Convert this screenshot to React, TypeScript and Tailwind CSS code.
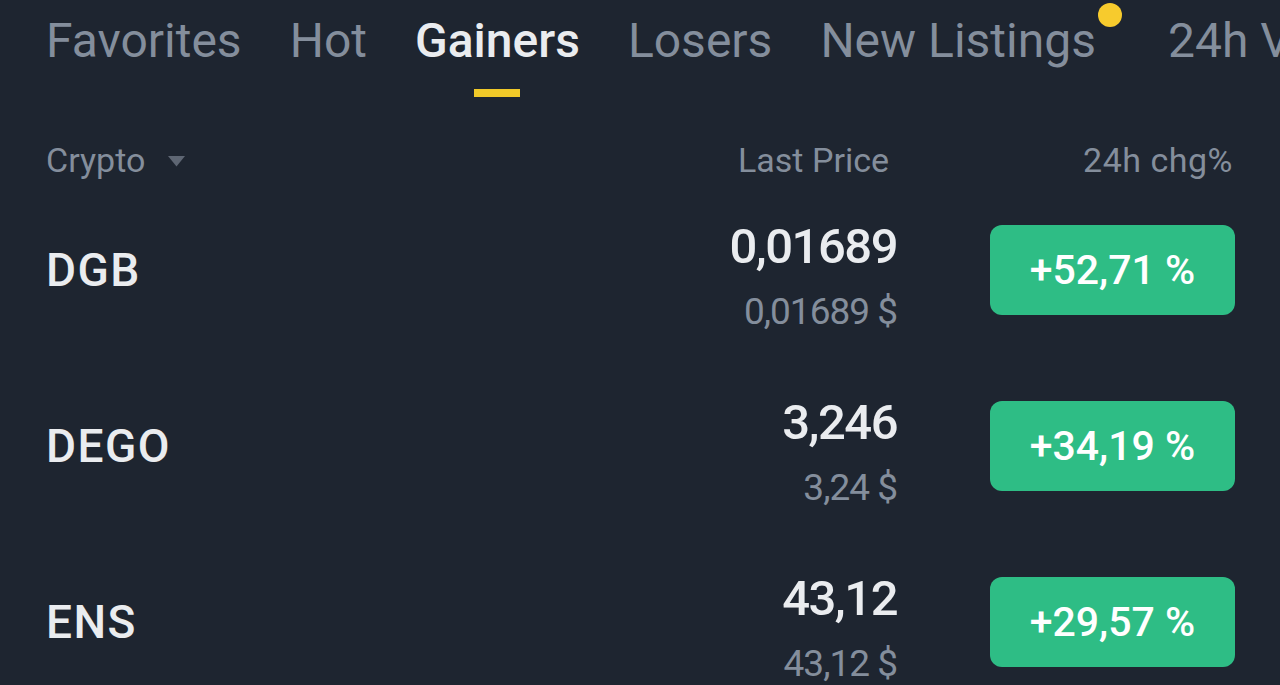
import { useState } from 'react'

interface Coin {
  symbol: string
  price: string
  usd: string
  change: string
}

const TABS = ['Favorites', 'Hot', 'Gainers', 'Losers', 'New Listings', '24h Volume']

const COINS: Coin[] = [
  { symbol: 'DGB', price: '0,01689', usd: '0,01689 $', change: '+52,71 %' },
  { symbol: 'DEGO', price: '3,246', usd: '3,24 $', change: '+34,19 %' },
  { symbol: 'ENS', price: '43,12', usd: '43,12 $', change: '+29,57 %' },
]

export default function App() {
  const [active, setActive] = useState('Gainers')

  return (
    <main className="h-[685px] w-[1280px] overflow-hidden bg-[#1e2530] font-['Roboto',sans-serif]">
      {/* tabs */}
      <nav className="flex h-[100px] gap-[48px] overflow-hidden whitespace-nowrap pl-[46px]">
        {TABS.map((t) => (
          <button
            key={t}
            onClick={() => setActive(t)}
            className={`relative flex flex-col items-center pt-[17px] ${t === 'New Listings' ? 'mr-[24px]' : ''}`}
          >
            <span
              className={`text-[48px] leading-[48px] ${
                t === active ? 'font-medium text-[#eaecef]' : 'text-[#848e9c]'
              }`}
            >
              {t}
            </span>
            {t === active && <span className="mt-[24px] h-[8px] w-[46px] bg-[#f0c929]" />}
            {t === 'New Listings' && (
              <span className="absolute right-[-26px] top-[3px] h-[24px] w-[24px] rounded-full bg-[#f7cb2d]" />
            )}
          </button>
        ))}
      </nav>

      {/* column headers */}
      <div className="flex h-[82px] items-start pl-[46px] pr-[45px] pt-[43px] text-[34px] leading-[34px] text-[#848e9c]">
        <div className="flex flex-1 items-center">
          <span>Crypto</span>
          <svg width="19" height="12" viewBox="0 0 19 12" className="ml-[22px] mt-[2px]">
            <path d="M1 1h17l-8.5 10.5z" fill="#5e6673" />
          </svg>
        </div>
        <span className="mr-[8px]">Last Price</span>
        <span className="ml-[93px] w-[245px] pr-[2px] text-right tracking-[0.5px]">24h chg%</span>
      </div>

      {/* rows */}
      {COINS.map((c) => (
        <div key={c.symbol} className="flex h-[176px] items-center pl-[46px] pr-[45px]">
          <span className="flex-1 text-[46px] font-medium leading-[46px] tracking-[1.5px] text-[#eaecef]">
            {c.symbol}
          </span>
          <div className="mt-[12px] flex flex-col items-end">
            <span className="text-[49px] font-medium leading-[49px] tracking-[-1.5px] text-[#eaecef]">{c.price}</span>
            <span className="mt-[22px] text-[37px] leading-[37px] tracking-[-1px] text-[#848e9c]">{c.usd}</span>
          </div>
          <div className="ml-[93px] flex h-[90px] w-[245px] items-center justify-center rounded-[12px] bg-[#2ebd85] pt-[2px] text-[41px] font-medium text-white">
            {c.change}
          </div>
        </div>
      ))}
    </main>
  )
}
